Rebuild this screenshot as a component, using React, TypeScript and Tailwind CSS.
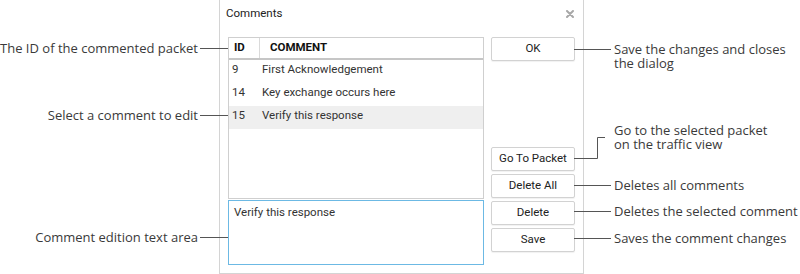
import React from "react";

const ui = "font-['Roboto',_'Liberation_Sans',_sans-serif]";
const note = "font-['Open_Sans',_'Liberation_Sans',_sans-serif] text-[13px] text-[#3a3a3a]";

type Row = { id: number; text: string; selected?: boolean };

const rows: Row[] = [
  { id: 9, text: "First Acknowledgement" },
  { id: 14, text: "Key exchange occurs here" },
  { id: 15, text: "Verify this response", selected: true },
];

const DialogButton = ({ name, className = "" }: { name: string; className?: string }) => (
  <button
    className={`h-[24px] w-full rounded-[2px] border border-[#d2d2d2] bg-white text-[11.5px] text-[#222] shadow-[0_1px_1px_rgba(0,0,0,0.06)] ${className}`}
  >
    {name}
  </button>
);

// left side callout: text, then a line running to the dialog
const LeftNote = ({ y, text }: { y: number; text: string }) => (
  <div className="absolute right-[572px] flex h-[16px] items-center gap-[2px]" style={{ top: y - 8 }}>
    <span className={`${note} whitespace-nowrap leading-[16px]`}>{text}</span>
    <div className="h-px w-[28px] bg-[#555]" />
  </div>
);

// right side callout, single line
const RightNote = ({ y, text }: { y: number; text: string }) => (
  <div className="absolute left-[574px] flex h-[16px] items-center gap-[3px]" style={{ top: y - 8 }}>
    <div className="h-px w-[37px] bg-[#555]" />
    <span className={`${note} whitespace-nowrap leading-[16px]`}>{text}</span>
  </div>
);

const App = () => {
  return (
    <div className="relative h-[274px] w-[800px] overflow-hidden bg-white">
      <div className="flex pl-[219px]">
        {/* ============= DIALOG ============= */}
        <div className={`${ui} flex h-[274px] w-[365px] flex-col border-x border-b border-[#d4d4d4] bg-white`}>
          <div className="flex h-[28px] items-center justify-between pl-[6px] pr-[9px]">
            <span className="text-[11.5px] text-[#222]">Comments</span>
            <svg width="8" height="8" viewBox="0 0 8 8" className="mt-[-1px]">
              <path d="M1 1 L7 7 M7 1 L1 7" stroke="#a8a8a8" strokeWidth="2" strokeLinecap="round" />
            </svg>
          </div>

          <div className="mt-[9px] flex pl-[8px]">
            <div className="flex w-[256px] flex-col gap-[1px]">
              {/* table */}
              <div className="h-[162px] border border-[#cfcfcf]">
                <div className="flex h-[22px] border-b-[2px] border-[#c6c6c6] text-[11.5px] font-bold text-[#111]">
                  <div className="flex w-[31px] items-center border-r border-[#dadada] pl-[5px]">ID</div>
                  <div className="flex items-center pl-[10px]">COMMENT</div>
                </div>
                {rows.map((row) => (
                  <div
                    key={row.id}
                    className={`flex h-[23px] pt-[2px] text-[11.5px] leading-[14px] text-[#333] ${row.selected ? "bg-[#efefef]" : ""}`}
                  >
                    <span className="w-[33px] pl-[3px]">{row.id}</span>
                    <span>{row.text}</span>
                  </div>
                ))}
              </div>
              {/* edit area */}
              <div className="h-[65px] border border-[#6cb9e4] px-[5px] pt-[4px] text-[11.5px] leading-[14px] text-[#333]">
                Verify this response
              </div>
            </div>

            <div className="ml-[7px] flex w-[84px] flex-col">
              <DialogButton name="OK" />
              <div className="mt-[86px] flex flex-col gap-[3px]">
                <DialogButton name="Go To Packet" />
                <DialogButton name="Delete All" />
                <DialogButton name="Delete" />
                <DialogButton name="Save" />
              </div>
            </div>
          </div>
        </div>
      </div>

      {/* ============= CALLOUTS ============= */}
      <LeftNote y={48} text="The ID of the commented packet" />
      <LeftNote y={115} text="Select a comment to edit" />
      <LeftNote y={237} text="Comment edition text area" />

      <div className="absolute left-[574px] top-[42px] flex items-start gap-[3px]">
        <div className="mt-[7px] h-px w-[37px] bg-[#555]" />
        <span className={`${note} leading-[14px]`}>
          Save the changes and closes
          <br />
          the dialog
        </span>
      </div>

      <svg className="absolute left-[574px] top-[136px]" width="32" height="24">
        <path d="M0 22.5 H23.5 V1.5 H31" stroke="#555" strokeWidth="1" fill="none" />
      </svg>
      <div className={`${note} absolute left-[614px] top-[123px] leading-[14px]`}>
        Go to the selected packet
        <br />
        on the traffic view
      </div>

      <RightNote y={185} text="Deletes all comments" />
      <RightNote y={211} text="Deletes the selected comment" />
      <RightNote y={238} text="Saves the comment changes" />
    </div>
  );
};

export default App;
